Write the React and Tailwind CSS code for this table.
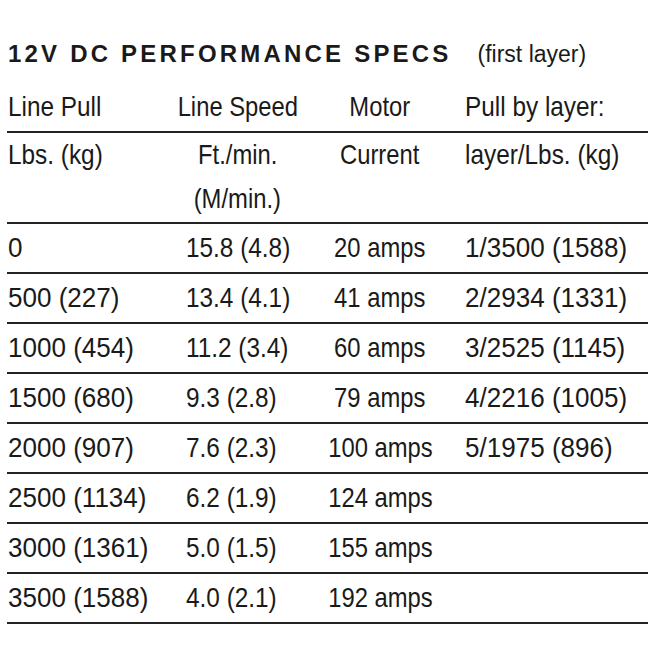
import React from "react";

const rows = [
  ["0", "15.8 (4.8)", "20 amps", "1/3500 (1588)"],
  ["500 (227)", "13.4 (4.1)", "41 amps", "2/2934 (1331)"],
  ["1000 (454)", "11.2 (3.4)", "60 amps", "3/2525 (1145)"],
  ["1500 (680)", "9.3 (2.8)", "79 amps", "4/2216 (1005)"],
  ["2000 (907)", "7.6 (2.3)", "100 amps", "5/1975 (896)"],
  ["2500 (1134)", "6.2 (1.9)", "124 amps", ""],
  ["3000 (1361)", "5.0 (1.5)", "155 amps", ""],
  ["3500 (1588)", "4.0 (2.1)", "192 amps", ""],
];

const grid = "grid w-[641px] grid-cols-[158px_145px_140px_198px]";

function L({ children }) {
  return <span className="inline-block whitespace-nowrap origin-left scale-x-[0.87]">{children}</span>;
}
function D({ children }) {
  return <span className="inline-block whitespace-nowrap origin-left scale-x-[0.93]">{children}</span>;
}
function C({ children }) {
  return <span className="inline-block whitespace-nowrap origin-center scale-x-[0.85]">{children}</span>;
}

export default function App() {
  return (
    <div className="w-[655px] h-[655px] bg-white pl-[7px] text-[#1a1a1a] font-['Liberation_Sans',Arial,sans-serif]">
      <div className="h-[82px] pt-[42px] pl-[1px] flex items-baseline">
        <span className="font-bold text-[24px] leading-[24px] tracking-[3.2px]">
          12V DC PERFORMANCE SPECS
        </span>
        <span className="ml-[26px] text-[23px] leading-[24px]">(first layer)</span>
      </div>

      <div className={`${grid} h-[51px] border-b-2 border-[#222] items-center text-[28px] leading-[28px]`}>
        <div className="pl-[1px]"><L>Line Pull</L></div>
        <div className="text-center"><C>Line Speed</C></div>
        <div className="text-center"><C>Motor</C></div>
        <div className="pl-[15px]"><L>Pull by layer:</L></div>
      </div>

      <div className={`${grid} h-[91px] border-b-2 border-[#222] items-start text-[28px] leading-[44px]`}>
        <div className="pl-[1px]"><L>Lbs. (kg)</L></div>
        <div className="text-center">
          <div><C>Ft./min.</C></div>
          <div><C>(M/min.)</C></div>
        </div>
        <div className="text-center"><C>Current</C></div>
        <div className="pl-[15px]"><L>layer/Lbs. (kg)</L></div>
      </div>

      {rows.map((r, i) => (
        <div
          key={i}
          className={`${grid} h-[50px] border-b-2 border-[#222] items-center text-[28px] leading-[28px]`}
        >
          <div className="pl-[1px]"><D>{r[0]}</D></div>
          <div className="pl-[21px]"><L>{r[1]}</L></div>
          <div className="text-center"><C>{r[2]}</C></div>
          <div className="pl-[15px]"><D>{r[3]}</D></div>
        </div>
      ))}
    </div>
  );
}
